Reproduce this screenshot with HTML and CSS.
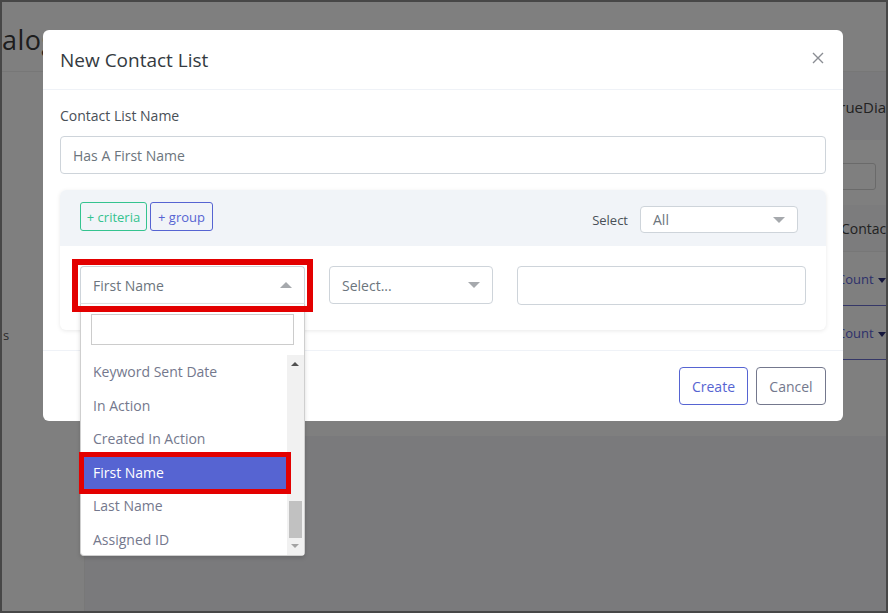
FILE: index.html
```html
<!DOCTYPE html>
<html>
<head>
<meta charset="utf-8">
<link rel="stylesheet" href="styles.css">
</head>
<body>
<div class="screen">
  <div class="page">
    <header class="topbar"><span class="page-title">alogs</span></header>
    <div class="layout">
      <aside class="sidebar"><span class="side-item">s</span></aside>
      <main class="main">
        <div class="main-head"><span class="main-title">TrueDialer</span></div>
        <section class="card">
          <div class="card-tools"><span class="tool-input"></span></div>
          <div class="card-th"><span>Contacts</span></div>
          <div class="card-row"><span class="count">Count <i class="mini-caret"></i></span></div>
          <div class="card-row"><span class="count">Count <i class="mini-caret"></i></span></div>
        </section>
      </main>
    </div>
  </div>

  <div class="backdrop"></div>

  <div class="modal">
    <div class="modal-header">
      <h5 class="modal-title">New Contact List</h5>
      <svg class="close" width="12" height="12" viewBox="0 0 12 12"><path d="M1 1 L11 11 M11 1 L1 11" stroke="#8a8d93" stroke-width="1.4" fill="none"/></svg>
    </div>
    <div class="modal-body">
      <label class="field-label">Contact List Name</label>
      <div class="text-input">Has A First Name</div>
      <div class="filter-box">
        <div class="filter-top">
          <div class="btn-group">
            <span class="chip chip-green">+ criteria</span>
            <span class="chip chip-blue">+ group</span>
          </div>
          <div class="match">
            <span class="match-label">Select</span>
            <span class="select select-sm">All<i class="caret-down"></i></span>
          </div>
        </div>
        <div class="filter-row">
          <div class="select select-field open">First Name<i class="caret-up"></i>
            <div class="dropdown">
              <div class="dd-search"></div>
              <div class="dd-list">
                <ul class="dd-items">
                  <li>Keyword Sent Date</li>
                  <li>In Action</li>
                  <li>Created In Action</li>
                  <li class="active">First Name</li>
                  <li>Last Name</li>
                  <li>Assigned ID</li>
                </ul>
                <div class="dd-scroll">
                  <i class="sb-up"></i>
                  <i class="sb-thumb"></i>
                  <i class="sb-down"></i>
                </div>
              </div>
            </div>
          </div>
          <div class="select select-op">Select...<i class="caret-down"></i></div>
          <div class="value-input"></div>
        </div>
      </div>
    </div>
    <div class="modal-footer">
      <span class="btn btn-create">Create</span>
      <span class="btn btn-cancel">Cancel</span>
    </div>
  </div>

  <div class="mark mark-select"></div>
  <div class="mark mark-item"></div>
</div>
</body>
</html>
```

FILE: styles.css
```css
* { box-sizing: border-box; }
html, body { margin: 0; padding: 0; }
body {
  font-family: "Open Sans", "Noto Sans", sans-serif;
  background: #474747;
}
.screen {
  width: 888px;
  height: 613px;
  border: 2px solid #474747;
  position: relative;
  overflow: hidden;
  background: #fff;
}
.page {
  display: flex;
  flex-direction: column;
  height: 100%;
}
.topbar {
  height: 70px;
  flex-shrink: 0;
  background: #fff;
  border-bottom: 1px solid #eeeeee;
  display: flex;
  align-items: center;
  padding-top: 6px;
}
.page-title {
  font-size: 27px;
  color: #3a3a3a;
  letter-spacing: 0.5px;
}
.layout {
  flex: 1;
  display: flex;
  min-height: 0;
}
.sidebar {
  width: 83px;
  flex-shrink: 0;
  background: #fff;
  border-right: 1px solid #f0f0f0;
  padding-top: 254px;
}
.side-item {
  display: block;
  font-size: 13px;
  color: #555;
  padding-left: 1px;
}
.main {
  flex: 1;
  min-width: 0;
  overflow: hidden;
  background: #f4f5f8;
  display: flex;
  flex-direction: column;
}
.main-head {
  height: 68px;
  flex-shrink: 0;
  padding-left: 746px;
  display: flex;
  align-items: center;
  padding-top: 2px;
}
.main-title {
  font-size: 15px;
  color: #444;
  white-space: nowrap;
}
.card {
  height: 296px;
  flex-shrink: 0;
  background: #fff;
  display: flex;
  flex-direction: column;
}
.card-tools {
  height: 65px;
  padding: 23px 10px 0 0;
  display: flex;
  justify-content: flex-end;
}
.tool-input {
  width: 200px;
  height: 27px;
  border: 1px solid #d4d4d4;
  border-radius: 3px;
}
.card-th {
  height: 47px;
  background: #f9f9fb;
  padding-left: 756px;
  display: flex;
  align-items: center;
  font-size: 14px;
  color: #444;
  white-space: nowrap;
  border-bottom: 1px solid #eee;
}
.card-row {
  height: 54px;
  padding-left: 752px;
  display: flex;
  align-items: center;
  border-bottom: 1px solid #6a6fce;
  white-space: nowrap;
}
.count {
  font-size: 13px;
  color: #5b62d6;
}
.mini-caret {
  display: inline-block;
  width: 0; height: 0;
  border-left: 4px solid transparent;
  border-right: 4px solid transparent;
  border-top: 5px solid #2a2f7a;
  vertical-align: middle;
  margin-left: 1px;
}

.backdrop {
  position: absolute;
  inset: 0;
  background: rgba(0, 0, 0, 0.5);
}

/* modal */
.modal {
  position: absolute;
  left: 41px;
  top: 28px;
  width: 800px;
  background: #fff;
  border-radius: 6px;
}
.modal-header {
  height: 60px;
  border-bottom: 1px solid #eff2f7;
  display: flex;
  align-items: center;
  justify-content: space-between;
  padding: 0 19px 0 17px;
}
.modal-title {
  margin: 0;
  font-size: 19px;
  font-weight: 500;
  color: #343a40;
}
.close { display: block; margin-top: -3px; }
.modal-body {
  padding: 16px 17px 20px;
}
.field-label {
  display: block;
  font-size: 14px;
  line-height: 20px;
  color: #495057;
  margin-bottom: 10px;
}
.text-input {
  height: 38px;
  border: 1px solid #ced4da;
  border-radius: 4px;
  padding: 0 12px;
  font-size: 14px;
  color: #6c757d;
  display: flex;
  align-items: center;
}
.filter-box {
  margin-top: 16px;
  border-radius: 6px;
  box-shadow: 0 1px 4px rgba(0, 0, 0, 0.09);
}
.filter-top {
  height: 56px;
  background: #f1f4f8;
  border-radius: 6px 6px 0 0;
  display: flex;
  align-items: flex-start;
  justify-content: space-between;
  padding: 12px 28px 0 20px;
}
.btn-group { display: flex; gap: 3px; }
.chip {
  height: 29px;
  display: flex;
  align-items: center;
  justify-content: center;
  white-space: nowrap;
  font-size: 13px;
  border: 1px solid;
  border-radius: 3px;
}
.chip-green { color: #34c38f; border-color: #34c38f; width: 67px; }
.chip-blue { color: #5664d2; border-color: #5664d2; width: 63px; }
.match {
  display: flex;
  align-items: center;
  gap: 12px;
  margin-top: 4px;
}
.match-label {
  font-size: 13px;
  color: #495057;
}
.select {
  position: relative;
  border: 1px solid #ced4da;
  border-radius: 4px;
  background: #fff;
  display: flex;
  align-items: center;
  padding: 0 12px;
  font-size: 14px;
  color: #6c757d;
  white-space: nowrap;
}
.select-sm {
  width: 158px;
  height: 27px;
}
.caret-down, .caret-up {
  position: absolute;
  right: 12px;
  top: 50%;
  width: 0; height: 0;
  border-left: 6px solid transparent;
  border-right: 6px solid transparent;
  margin-top: -3px;
}
.caret-down { border-top: 6px solid #a6a9ad; }
.caret-up { border-bottom: 6px solid #a6a9ad; }
.filter-row {
  display: flex;
  gap: 24px;
  padding: 20px 20px 25px;
}
.select-field {
  width: 225px;
  height: 38px;
}
.select-field.open {
  border-radius: 4px 4px 0 0;
  border-bottom-color: #e3e3e3;
}
.select-op {
  width: 164px;
  height: 38px;
}
.value-input {
  flex: 1;
  height: 39px;
  border: 1px solid #ced4da;
  border-radius: 4px;
}

/* dropdown */
.dropdown {
  position: absolute;
  left: -1px;
  top: 37px;
  width: 225px;
  height: 252px;
  background: #fff;
  border: 1px solid #cfcfcf;
  border-top: none;
  border-radius: 0 0 4px 4px;
  box-shadow: 0 2px 4px rgba(0, 0, 0, 0.15);
  z-index: 2;
}
.dd-search {
  margin: 10px 10px 0;
  height: 31px;
  border: 1px solid #cccccc;
}
.dd-list {
  margin-top: 10px;
  height: 200px;
  display: flex;
  overflow: hidden;
}
.dd-items {
  list-style: none;
  margin: 0;
  padding: 0;
  flex: 1;
}
.dd-items li {
  height: 33.5px;
  display: flex;
  align-items: center;
  padding-left: 12px;
  font-size: 14px;
  color: #74788d;
  white-space: nowrap;
}
.dd-items li.active {
  background: #5664d2;
  color: #fff;
}
.dd-scroll {
  width: 17px;
  background: #f1f1f1;
  position: relative;
}
.sb-up, .sb-down {
  position: absolute;
  left: 4px;
  width: 0; height: 0;
  border-left: 4px solid transparent;
  border-right: 4px solid transparent;
}
.sb-up { top: 7px; border-bottom: 4px solid #505050; }
.sb-down { bottom: 7px; border-top: 4px solid #a3a3a3; }
.sb-thumb {
  position: absolute;
  left: 2px;
  width: 13px;
  top: 146px;
  height: 37px;
  background: #c1c1c1;
}

.modal-footer {
  border-top: 1px solid #eff2f7;
  padding: 16px 17px 16px;
  display: flex;
  justify-content: flex-end;
  gap: 8px;
}
.btn {
  height: 38px;
  display: flex;
  align-items: center;
  justify-content: center;
  border: 1px solid;
  border-radius: 4px;
  font-size: 14px;
}
.btn-create { width: 69px; color: #5664d2; border-color: #5664d2; }
.btn-cancel { width: 70px; color: #74788d; border-color: #74788d; }

/* annotation marks */
.mark {
  position: absolute;
  border: 6px solid #e30000;
  z-index: 5;
}
.mark-select {
  left: 70px;
  top: 257px;
  width: 241px;
  height: 53px;
}
.mark-item {
  left: 77px;
  top: 450px;
  width: 212px;
  height: 42px;
  border-width: 5px;
}
```
